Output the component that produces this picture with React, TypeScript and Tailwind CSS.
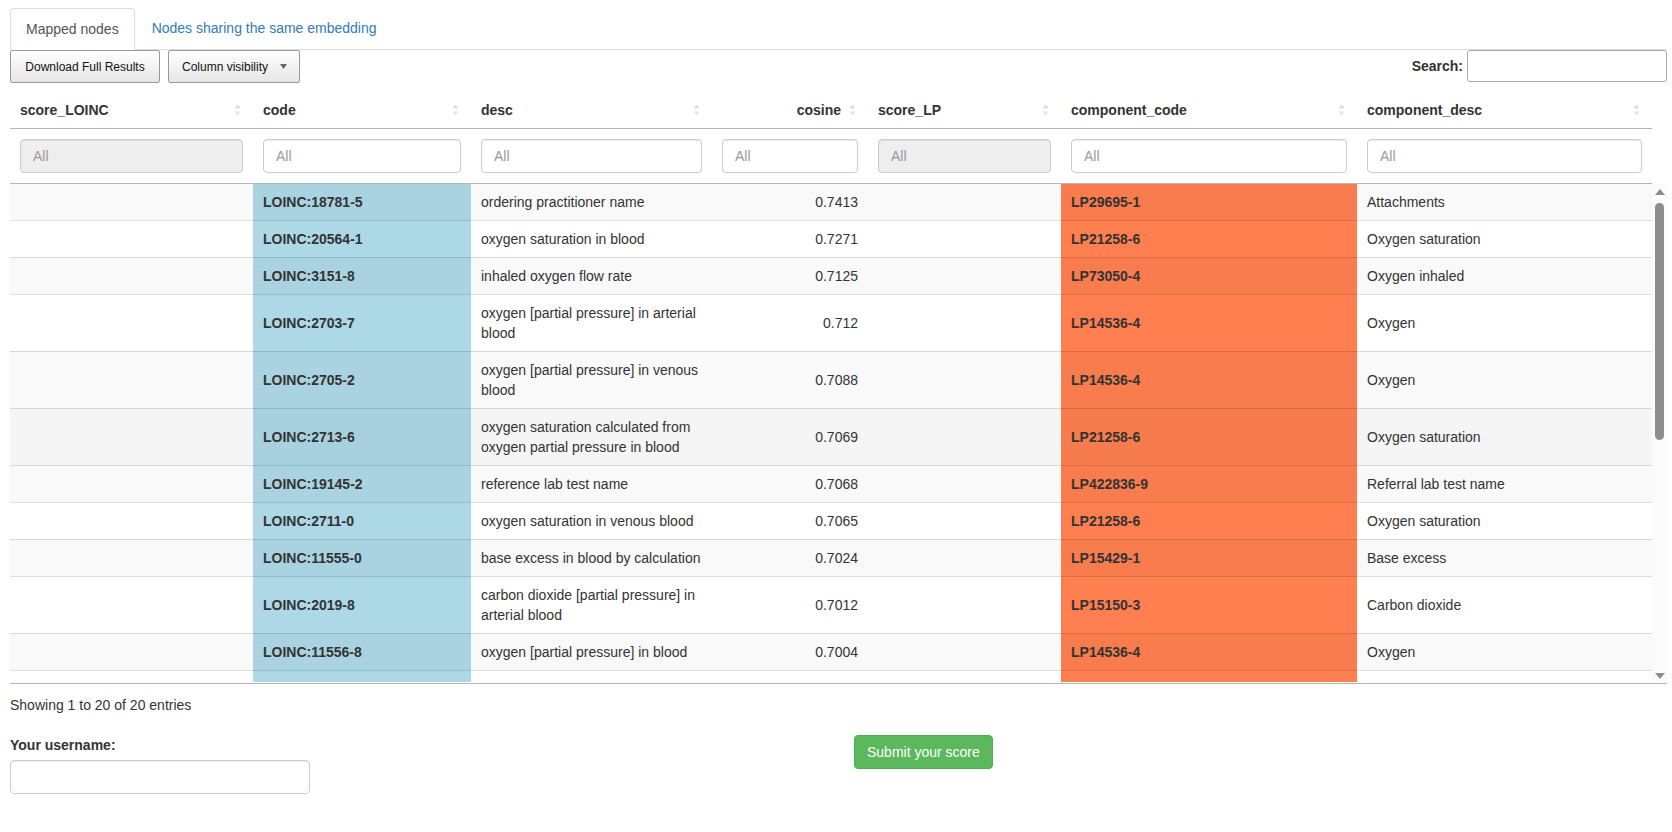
import React from 'react';

type Row = {
  code: string;
  desc: string[];
  cosine: string;
  lp: string;
  compDesc: string;
};

const rows: Row[] = [
  { code: 'LOINC:18781-5', desc: ['ordering practitioner name'], cosine: '0.7413', lp: 'LP29695-1', compDesc: 'Attachments' },
  { code: 'LOINC:20564-1', desc: ['oxygen saturation in blood'], cosine: '0.7271', lp: 'LP21258-6', compDesc: 'Oxygen saturation' },
  { code: 'LOINC:3151-8', desc: ['inhaled oxygen flow rate'], cosine: '0.7125', lp: 'LP73050-4', compDesc: 'Oxygen inhaled' },
  { code: 'LOINC:2703-7', desc: ['oxygen [partial pressure] in arterial', 'blood'], cosine: '0.712', lp: 'LP14536-4', compDesc: 'Oxygen' },
  { code: 'LOINC:2705-2', desc: ['oxygen [partial pressure] in venous', 'blood'], cosine: '0.7088', lp: 'LP14536-4', compDesc: 'Oxygen' },
  { code: 'LOINC:2713-6', desc: ['oxygen saturation calculated from', 'oxygen partial pressure in blood'], cosine: '0.7069', lp: 'LP21258-6', compDesc: 'Oxygen saturation' },
  { code: 'LOINC:19145-2', desc: ['reference lab test name'], cosine: '0.7068', lp: 'LP422836-9', compDesc: 'Referral lab test name' },
  { code: 'LOINC:2711-0', desc: ['oxygen saturation in venous blood'], cosine: '0.7065', lp: 'LP21258-6', compDesc: 'Oxygen saturation' },
  { code: 'LOINC:11555-0', desc: ['base excess in blood by calculation'], cosine: '0.7024', lp: 'LP15429-1', compDesc: 'Base excess' },
  { code: 'LOINC:2019-8', desc: ['carbon dioxide [partial pressure] in', 'arterial blood'], cosine: '0.7012', lp: 'LP15150-3', compDesc: 'Carbon dioxide' },
  { code: 'LOINC:11556-8', desc: ['oxygen [partial pressure] in blood'], cosine: '0.7004', lp: 'LP14536-4', compDesc: 'Oxygen' },
  { code: '', desc: [''], cosine: '', lp: '', compDesc: '' },
];

const colWidths = [243, 218, 241, 156, 193, 296, 295];

const SortIcon = () => (
  <svg width="7" height="14" viewBox="0 0 7 14" className="shrink-0">
    <path d="M3.5 1.5 L6.5 5.5 L0.5 5.5 Z" fill="#dcdcdc" />
    <path d="M0.5 8.5 L6.5 8.5 L3.5 12.5 Z" fill="#e4e4e4" />
  </svg>
);

const Cols = () => (
  <colgroup>
    {colWidths.map((w, i) => (
      <col key={i} style={{ width: w }} />
    ))}
  </colgroup>
);

// background per row state: 'odd' (striped), 'even', 'hover'
const plainBg = { odd: 'bg-[#f9f9f9]', even: 'bg-white', hover: 'bg-[#f5f5f5]' };
const blueBg = { odd: 'bg-[#a9d3e1]', even: 'bg-[#add8e6]', hover: 'bg-[#a7d1df]' };
const coralBg = { odd: 'bg-[#f97c4e]', even: 'bg-[#ff7f50]', hover: 'bg-[#f67b4d]' };

const FilterInput = ({ disabled }: { disabled?: boolean }) => (
  <input
    type="text"
    placeholder="All"
    disabled={disabled}
    className={`block w-full h-[34px] px-[12px] text-[14px] border border-[#ccc] rounded-[4px] shadow-[inset_0_1px_1px_rgba(0,0,0,0.075)] placeholder:text-[#999] outline-none ${
      disabled ? 'bg-[#eee]' : 'bg-white'
    }`}
  />
);

const App = () => {
  const headers = ['score_LOINC', 'code', 'desc', 'cosine', 'score_LP', 'component_code', 'component_desc'];

  return (
    <div className="w-[1672px] h-[832px] bg-white text-[#333] text-[14px] leading-[20px] font-['Liberation_Sans',Arial,sans-serif] pl-[10px] pr-[5px]">
      {/* Tabs */}
      <ul className="flex pt-[8px] border-b border-[#ddd]">
        <li className="-mb-px mr-[2px] px-[15px] py-[10px] border border-[#ddd] border-b-transparent rounded-t-[4px] bg-white text-[#555]">
          Mapped nodes
        </li>
        <li className="px-[15px] py-[10px] text-[#337ab7]">Nodes sharing the same embedding</li>
      </ul>

      {/* Buttons + search */}
      <div className="flex items-start justify-between">
        <div className="flex gap-[8px]">
          <button className="h-[33px] w-[150px] text-[12px] text-[#111] border border-[#999] rounded-[2px] bg-gradient-to-b from-white to-[#e6e6e6]">
            Download Full Results
          </button>
          <button className="h-[33px] w-[132px] pl-[13px] flex items-center text-[12px] text-[#111] border border-[#999] rounded-[2px] bg-gradient-to-b from-white to-[#e6e6e6]">
            <span>Column visibility</span>
            <svg width="7" height="5" viewBox="0 0 7 5" className="ml-[12px]">
              <path d="M0 0 L7 0 L3.5 5 Z" fill="#666" />
            </svg>
          </button>
        </div>
        <div className="flex items-center">
          <span className="font-bold">Search:</span>
          <input className="ml-[4px] w-[200px] h-[32px] border border-[#aaa] rounded-[3px] bg-white outline-none" />
        </div>
      </div>

      {/* Header + filters */}
      <table className="mt-[9px] table-fixed border-separate border-spacing-0 w-[1642px]">
        <Cols />
        <thead>
          <tr>
            {headers.map((h) => (
              <th key={h} className="p-0 font-bold border-b border-[#b4b4b4]">
                <div
                  className={`flex items-center py-[8px] pl-[10px] pr-[12px] ${
                    h === 'cosine' ? 'justify-end gap-[8px]' : 'justify-between'
                  }`}
                >
                  <span>{h}</span>
                  <SortIcon />
                </div>
              </th>
            ))}
          </tr>
          <tr>
            {headers.map((h) => (
              <td key={h} className="px-[10px] py-[10px]">
                <FilterInput disabled={h === 'score_LOINC' || h === 'score_LP'} />
              </td>
            ))}
          </tr>
        </thead>
      </table>

      {/* Scroll body */}
      <div className="flex w-[1657px] border-b border-[#b4b4b4]">
        <div className="w-[1642px] h-[499px] overflow-hidden border-t border-[#b4b4b4]">
          <table className="table-fixed border-separate border-spacing-0 w-[1642px]">
            <Cols />
            <tbody>
              {rows.map((r, i) => {
                const state = i === 5 ? 'hover' : i % 2 === 0 ? 'odd' : 'even';
                const bd = i === 0 ? '' : 'border-t border-[rgba(0,0,0,0.13)]';
                const cell = `px-[10px] py-[8px] align-middle ${bd}`;
                return (
                  <tr key={i} className={r.code === '' ? 'h-[57px]' : ''}>
                    <td className={`${cell} ${plainBg[state]}`}></td>
                    <td className={`${cell} ${blueBg[state]} font-bold`}>{r.code}</td>
                    <td className={`${cell} ${plainBg[state]}`}>
                      {r.desc.map((d, k) => (
                        <div key={k}>{d}</div>
                      ))}
                    </td>
                    <td className={`${cell} ${plainBg[state]} text-right`}>{r.cosine}</td>
                    <td className={`${cell} ${plainBg[state]}`}></td>
                    <td className={`${cell} ${coralBg[state]} font-bold`}>{r.lp}</td>
                    <td className={`${cell} ${plainBg[state]}`}>{r.compDesc}</td>
                  </tr>
                );
              })}
            </tbody>
          </table>
        </div>
        {/* scrollbar */}
        <div className="w-[15px] h-[499px] mt-px bg-[#fbfbfb] flex flex-col items-center pt-[5px] pb-[4px]">
          <svg width="10" height="6" viewBox="0 0 10 6">
            <path d="M5 0 L10 6 L0 6 Z" fill="#8c8c8c" />
          </svg>
          <div className="mt-[8px] w-[9px] h-[237px] rounded-full bg-[#8e8e8e]" />
          <div className="flex-1" />
          <svg width="10" height="6" viewBox="0 0 10 6">
            <path d="M0 0 L10 0 L5 6 Z" fill="#8c8c8c" />
          </svg>
        </div>
      </div>

      <div className="pt-[11px]">Showing 1 to 20 of 20 entries</div>

      {/* Username + submit */}
      <div className="flex mt-[20px]">
        <div className="w-[844px]">
          <label className="block font-bold mb-[5px]">Your username:</label>
          <input className="block w-[300px] h-[34px] px-[12px] border border-[#ccc] rounded-[4px] shadow-[inset_0_1px_1px_rgba(0,0,0,0.075)] outline-none" />
        </div>
        <div>
          <button className="h-[34px] px-[12px] text-white bg-[#5cb85c] border border-[#4cae4c] rounded-[4px]">
            Submit your score
          </button>
        </div>
      </div>
    </div>
  );
};

export default App;
